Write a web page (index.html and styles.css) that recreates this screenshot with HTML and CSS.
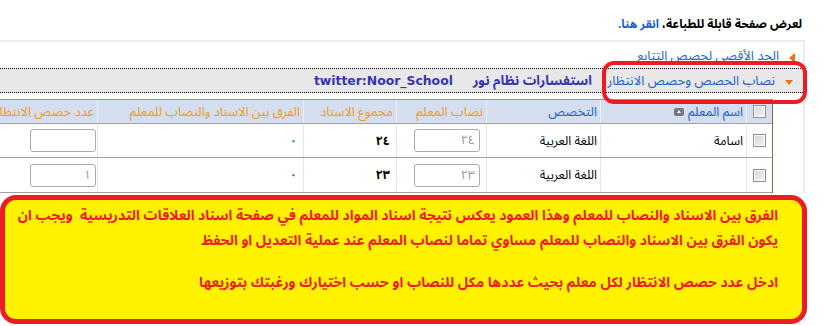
FILE: index.html
```html
<!DOCTYPE html>
<html lang="ar" dir="rtl">
<head>
<meta charset="utf-8">
<link rel="stylesheet" href="styles.css">
</head>
<body>
<div class="page">
  <div class="print-line"><span class="print-text">لعرض صفحة قابلة للطباعة، </span><a class="print-link">انقر هنا.</a></div>

  <div class="panel">
    <div class="tab tab-closed"><span class="arrow-left"></span><span class="tab-text">الحد الأقصى لحصص التتابع</span></div>
    <div class="band">
      <div class="tab tab-open"><span class="arrow-down"></span><span class="tab-text">نصاب الحصص وحصص الانتظار</span></div>
      <span class="band-link">استفسارات نظام نور</span>
      <span class="band-link latin">twitter:Noor_School</span>
    </div>

    <div class="grid">
      <div class="row head">
        <div class="cell chk"><span class="checkbox"></span></div>
        <div class="cell blue"><span>اسم المعلم</span><span class="sort"></span></div>
        <div class="cell blue">التخصص</div>
        <div class="cell orange">نصاب المعلم</div>
        <div class="cell orange">مجموع الاسناد</div>
        <div class="cell orange">الفرق بين الاسناد والنصاب للمعلم</div>
        <div class="cell orange">عدد حصص الانتظار</div>
      </div>
      <div class="row">
        <div class="cell chk"><span class="checkbox"></span></div>
        <div class="cell">اسامة</div>
        <div class="cell">اللغة العربية</div>
        <div class="cell num"><span class="input">٢٤</span></div>
        <div class="cell num bold">٢٤</div>
        <div class="cell num green">٠</div>
        <div class="cell wait"><span class="input"></span></div>
      </div>
      <div class="row last">
        <div class="cell chk"><span class="checkbox"></span></div>
        <div class="cell"></div>
        <div class="cell">اللغة العربية</div>
        <div class="cell num"><span class="input">٢٣</span></div>
        <div class="cell num bold">٢٣</div>
        <div class="cell num green">٠</div>
        <div class="cell wait"><span class="input">١</span></div>
      </div>
    </div>
  </div>

  <div class="note">
    <p>الفرق بين الاسناد والنصاب للمعلم وهذا العمود يعكس نتيجة اسناد المواد للمعلم في صفحة اسناد العلاقات التدريسية&nbsp; ويجب ان<br>يكون الفرق بين الاسناد والنصاب للمعلم مساوي تماما لنصاب المعلم عند عملية التعديل او الحفظ</p>
    <p>ادخل عدد حصص الانتظار لكل معلم بحيث عددها مكل للنصاب او حسب اختيارك ورغبتك بتوزيعها</p>
  </div>

  <div class="highlight"></div>
</div>
</body>
</html>
```

FILE: styles.css
```css
* { box-sizing: border-box; }

html, body {
  margin: 0;
  padding: 0;
  background: #ffffff;
}

body {
  direction: rtl;
  font-family: "Noto Sans Arabic", "DejaVu Sans", sans-serif;
  font-size: 12.8px;
  color: #000;
  overflow: hidden;
}

.page {
  position: relative;
  width: 823px;
  height: 326px;
}

.print-line {
  padding: 16px 21px 0 0;
  height: 40px;
  line-height: 18px;
  font-weight: bold;
  font-size: 11.9px;
}

.print-link {
  color: #1a5fc8;
}

.panel {
  width: 805px;
  margin-right: 18px;
  border-top: 2px solid #ececec;
  border-right: 2px solid #ececec;
  overflow: hidden;
}

.tab {
  display: flex;
  align-items: center;
  gap: 10px;
  padding-right: 8px;
  color: #1e62c8;
  font-size: 13px;
  line-height: 16px;
}

.tab-closed {
  height: 26px;
  padding-top: 2px;
}

.arrow-left {
  width: 0;
  height: 0;
  border-top: 5px solid transparent;
  border-bottom: 5px solid transparent;
  border-right: 6px solid #e8731a;
  margin-top: 3px;
}

.arrow-down {
  width: 0;
  height: 0;
  border-left: 4px solid transparent;
  border-right: 4px solid transparent;
  border-top: 5px solid #e8731a;
  margin-top: 4px;
  margin-right: 2px;
}

.band {
  display: flex;
  align-items: center;
  height: 25px;
  background: #e8e8e8;
  border-top: 1px dotted #000;
  border-bottom: 1px dotted #000;
  margin-bottom: 6px;
}

.tab-open {
  width: 211px;
}

.band-link {
  font-weight: bold;
  font-size: 13.4px;
  line-height: 16px;
  color: #3535b5;
  margin-left: 20px;
}

.band-link.latin {
  font-family: "DejaVu Sans", sans-serif;
  font-size: 12.4px;
}

.grid {
  width: 815px;
  margin-right: 30px;
  border-top: 1px solid #a88b5e;
  border-right: 1px solid #7d6a4b;
}

.row {
  display: grid;
  grid-template-columns: 26px 146px 114px 90px 93px 206px 140px;
  height: 34px;
  border-bottom: 1px solid #a0a0a0;
  font-size: 12.5px;
  line-height: 16px;
}

.row.last {
  height: 35px;
}

.row.head {
  height: 24px;
  background: #d4deef;
  font-size: 12.8px;
}

.cell {
  display: flex;
  align-items: center;
  gap: 4px;
  padding: 0 3px;
  border-left: 1px solid #e6e6e6;
  white-space: nowrap;
  min-width: 0;
}

.head .cell {
  border-left-color: #eef1f7;
}

.cell.chk {
  justify-content: center;
  padding: 0;
}

.checkbox {
  display: block;
  width: 13px;
  height: 13px;
  border: 1px solid #8e8e8e;
  background: linear-gradient(135deg, #d4d4d4, #f6f6f6);
  box-shadow: inset 0 0 0 1px #fff;
}

.blue { color: #1e62c8; }
.orange { color: #f39b1a; }

.sort {
  display: inline-block;
  width: 10px;
  height: 8px;
  border-radius: 2px;
  background: #777;
  position: relative;
}

.sort::after {
  content: "";
  position: absolute;
  left: 3px;
  top: 2px;
  border-left: 2px solid transparent;
  border-right: 2px solid transparent;
  border-bottom: 3px solid #fff;
}

.num {
  padding-right: 6px;
}

.bold { font-weight: bold; }
.green { color: #14a014; font-weight: bold; }

.input {
  display: block;
  width: 66px;
  height: 23px;
  border: 1px solid #ababab;
  border-radius: 3px;
  padding-right: 4px;
  line-height: 21px;
  color: #999;
  background: #fff;
}

.wait {
  padding-right: 1px;
}

.note {
  width: 807px;
  height: 129px;
  margin-top: 2px;
  margin-right: 16px;
  border: 5px solid #ed1c24;
  border-radius: 16px;
  background: #fff200;
  padding: 4px 24px 0 0;
  color: #ed1c24;
  font-weight: bold;
  font-size: 14px;
  line-height: 24.5px;
}

.note p {
  margin: 0 0 18px;
  white-space: nowrap;
}

.highlight {
  position: absolute;
  top: 61px;
  right: 16px;
  width: 205px;
  height: 43px;
  border: 4px solid #ed1c24;
  border-radius: 12px;
}
```
